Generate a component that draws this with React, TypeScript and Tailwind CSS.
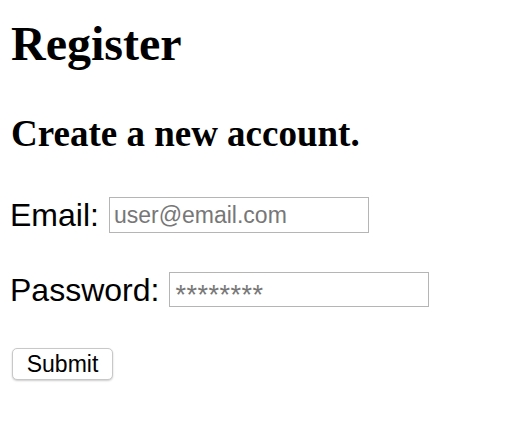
export default function App() {
  return (
    <div className="w-[528px] h-[436px] bg-white text-black px-[11px] pt-[16px]">
      <h1 className="font-['Liberation_Serif',serif] font-bold text-[48px] leading-[56px] m-0">Register</h1>
      <h2 className="font-['Liberation_Serif',serif] font-bold text-[37px] leading-[42px] mt-[41px]">Create a new account.</h2>
      <form className="font-['Liberation_Sans',Arial,sans-serif]" onSubmit={(e) => e.preventDefault()}>
        <div className="flex items-center mt-[42px] h-[36px]">
          <label className="text-[32px] leading-[36px] mr-[10px] -ml-[1px]">Email:</label>
          <input
            className="w-[260px] h-[36px] border border-[#b5b5b5] px-[4px] text-[23px] placeholder:text-[#777] outline-none"
            placeholder="user@email.com"
          />
        </div>
        <div className="flex items-center mt-[39px] h-[35px]">
          <label className="text-[32px] leading-[36px] mr-[10px] -ml-[1px]">Password:</label>
          <input
            type="password"
            className="w-[260px] h-[35px] border border-[#b5b5b5] px-[5px] pt-[12px] text-[27px] tracking-[0.5px] placeholder:text-[#777] outline-none"
            placeholder="********"
          />
        </div>
        <button
          type="submit"
          className="mt-[41px] ml-[1px] w-[101px] h-[32px] rounded-[5px] border border-[#c8c8c8] bg-white text-[23px] leading-none shadow-[0_1px_2px_rgba(0,0,0,0.2)]"
        >
          Submit
        </button>
      </form>
    </div>
  );
}
